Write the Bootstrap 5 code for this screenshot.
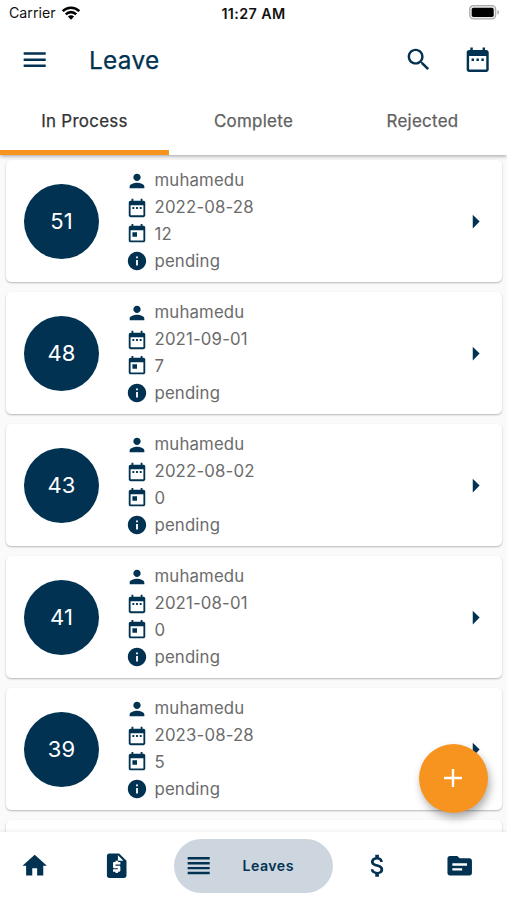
<!DOCTYPE html>
<html lang="en">
<head>
<meta charset="utf-8">
<meta name="viewport" content="width=device-width, initial-scale=1">
<title>Leave</title>
<link href="https://cdn.jsdelivr.net/npm/bootstrap@5.3.0/dist/css/bootstrap.min.css" rel="stylesheet">
<style>
:root{--navy:#023252;--orange:#f7941f}
body{font-family:Inter,"Liberation Sans",sans-serif;background:#fafafa;color:var(--navy)}
.screen{width:507px;height:900px;overflow:hidden}
.ico{width:29.4px;height:29.4px;fill:currentColor;flex:none;display:block}
.ico-sm{width:22px;height:22px}
.ico-arrow{width:33px;height:33px}
.status{height:28px;color:#111;font-size:14.2px;padding:0 7px 0 9px}
.carrier{padding-bottom:2px}
.status-time{font-weight:600;font-size:14.3px;letter-spacing:.4px}
.appbar{height:64px;padding:0 14.5px 0 20px}
.title{font-size:24.4px;line-height:28px;letter-spacing:.3px;margin-left:39.5px;font-weight:400;-webkit-text-stroke:.25px currentColor}
.top-area{box-shadow:0 1px 4px rgba(0,0,0,.38);z-index:2}
.tabs{height:63px}
.tabs .nav-link{height:63px;border-bottom:5px solid transparent;border-radius:0;color:#616161;font-weight:400;-webkit-text-stroke:.25px currentColor;font-size:16.9px;line-height:24px;letter-spacing:.3px;padding:17px 0 0}
.tabs .nav-link.active{border-color:var(--orange);color:#333}
.list-area{padding:5px 5px 0 6px;gap:10px;min-height:0}
.leave-card{height:122px;flex:none;border-radius:5px;box-shadow:0 1px 2px rgba(0,0,0,.28);padding:0 10px 0 18px}
.num{width:75px;height:75px;background:var(--navy);font-size:22px;letter-spacing:.2px}
.info{margin-left:27px;color:#6b6b6b;font-size:16.8px;letter-spacing:.15px}
.info-row{height:26.85px;gap:6.5px}
.info-row svg{color:var(--navy)}
.fab{width:69px;height:69px;right:19.5px;bottom:87.5px;background:var(--orange);z-index:3;box-shadow:2px 5px 9px rgba(0,0,0,.32)}
.bottom-nav{height:68px;z-index:2;box-shadow:0 -1px 4px rgba(0,0,0,.07);padding:0 0 0 20.3px}
.bottom-nav .bill{margin:0 42.5px 0 52.5px}
.bottom-nav .money{margin:0 53px 0 29.5px}
.pill{width:159px;height:54px;background:#cdd6de;font-weight:600;font-size:14.2px;letter-spacing:.45px;padding-left:10px;gap:29px}
</style>
<script src="https://cdn.jsdelivr.net/npm/bootstrap@5.3.0/dist/js/bootstrap.bundle.min.js"></script>
</head>
<body>
<svg class="d-none">
<symbol id="range" viewBox="0 0 24 24"><path d="M9 11H7v2h2v-2zm4 0h-2v2h2v-2zm4 0h-2v2h2v-2zm2-7h-1V2h-2v2H8V2H6v2H5c-1.11 0-1.99.9-1.99 2L3 20c0 1.1.89 2 2 2h14c1.1 0 2-.9 2-2V6c0-1.1-.9-2-2-2zm0 16H5V9h14v11z"/></symbol>
<symbol id="today" viewBox="0 0 24 24"><path d="M19 3h-1V1h-2v2H8V1H6v2H5c-1.11 0-1.99.9-1.99 2L3 19c0 1.1.89 2 2 2h14c1.1 0 2-.9 2-2V5c0-1.1-.9-2-2-2zm0 16H5V8h14v11zM7 10h5v5H7z"/></symbol>
<symbol id="person" viewBox="0 0 24 24"><path d="M12 12c2.21 0 4-1.79 4-4s-1.79-4-4-4-4 1.79-4 4 1.79 4 4 4zm0 2c-2.67 0-8 1.34-8 4v2h16v-2c0-2.66-5.33-4-8-4z"/></symbol>
<symbol id="info" viewBox="0 0 24 24"><path d="M12 2C6.48 2 2 6.48 2 12s4.48 10 10 10 10-4.48 10-10S17.52 2 12 2zm1 15h-2v-6h2v6zm0-8h-2V7h2v2z"/></symbol>
<symbol id="arrow" viewBox="0 0 24 24"><path d="M10 17l5-5-5-5v10z"/></symbol>
</svg>
<div class="screen d-flex flex-column position-relative">
  <header class="top-area bg-white position-relative flex-shrink-0">
    <div class="status d-flex align-items-center justify-content-between position-relative">
      <div class="carrier d-flex align-items-center">Carrier
        <svg class="ms-1" width="22" height="16" viewBox="0 0 22 16" fill="none" stroke="#000" stroke-width="2.6"><path d="M2.7 6.1a11.8 11.8 0 0 1 16.6 0M5.8 9.3a7.4 7.4 0 0 1 10.4 0"/><path d="M11 14.7 7.9 11.6a4.4 4.4 0 0 1 6.2 0z" fill="#000" stroke="none"/></svg>
      </div>
      <div class="status-time position-absolute start-50 translate-middle-x text-nowrap">11:27 AM</div>
      <svg class="mb-1" width="31" height="15" viewBox="0 0 31 15"><rect x=".7" y=".7" width="26" height="13.2" rx="3.6" fill="#ececec" stroke="#aaa" stroke-width="1.2"/><rect x="2.7" y="2.7" width="22" height="9.2" rx="1.7"/><path d="M28.4 5v4.6c2.2-.8 2.2-3.8 0-4.6z" fill="#aaa"/></svg>
    </div>
    <div class="appbar d-flex align-items-center">
      <svg class="ico" viewBox="0 0 24 24"><path d="M3 18h18v-2H3v2zm0-5h18v-2H3v2zm0-7v2h18V6H3z"/></svg>
      <div class="title">Leave</div>
      <svg class="ico ms-auto" viewBox="0 0 24 24"><path d="M15.5 14h-.79l-.28-.27C15.41 12.59 16 11.11 16 9.5 16 5.91 13.09 3 9.5 3S3 5.91 3 9.5 5.91 16 9.5 16c1.61 0 3.09-.59 4.23-1.57l.27.28v.79l5 4.99L20.49 19l-4.99-5zm-6 0C7.01 14 5 11.99 5 9.5S7.01 5 9.5 5 14 7.01 14 9.5 11.99 14 9.5 14z"/></svg>
      <svg class="ico" style="margin-left:30px"><use href="#range"/></svg>
    </div>
    <nav class="tabs nav nav-fill flex-nowrap">
      <a class="nav-link active col-4" href="#">In Process</a>
      <a class="nav-link col-4" href="#">Complete</a>
      <a class="nav-link col-4" href="#">Rejected</a>
    </nav>
  </header>
  <main class="list-area d-flex flex-column flex-fill overflow-hidden" id="leaves"></main>
  <button class="fab btn border-0 rounded-circle position-absolute d-flex align-items-center justify-content-center p-0" aria-label="Add">
    <svg width="18" height="18" viewBox="0 0 18 18" stroke="#fff" stroke-width="2.4"><path d="M9 0v18M0 9h18"/></svg>
  </button>
  <nav class="bottom-nav bg-white d-flex align-items-center position-relative flex-shrink-0">
    <svg class="ico" viewBox="0 0 24 24"><path d="M10 20v-6h4v6h5v-8h3L12 3 2 12h3v8z"/></svg>
    <svg class="ico bill" viewBox="0 0 24 24"><path d="M14 2H6c-1.1 0-1.99.9-1.99 2L4 20c0 1.1.89 2 1.99 2H18c1.1 0 2-.9 2-2V8l-6-6zm1 9h-4v1h3c.55 0 1 .45 1 1v3c0 .55-.45 1-1 1h-1v1h-2v-1H9v-2h4v-1h-3c-.55 0-1-.45-1-1v-3c0-.55.45-1 1-1h1V8h2v1h2v2zm-2-3V3.5L17.5 8H13z"/></svg>
    <div class="pill rounded-pill d-flex align-items-center">
      <svg class="ico" viewBox="0 0 24 24"><path d="M3 15h18v-2H3v2zm0 4h18v-2H3v2zm0-8h18V9H3v2zm0-6v2h18V5H3z"/></svg>
      <span>Leaves</span>
    </div>
    <svg class="ico money" viewBox="0 0 24 24"><path d="M11.8 10.9c-2.27-.59-3-1.2-3-2.15 0-1.09 1.01-1.85 2.7-1.85 1.78 0 2.44.85 2.5 2.1h2.21c-.07-1.72-1.12-3.3-3.21-3.81V3h-3v2.16c-1.94.42-3.5 1.68-3.5 3.61 0 2.31 1.91 3.46 4.7 4.13 2.5.6 3 1.48 3 2.41 0 .69-.49 1.79-2.7 1.79-2.06 0-2.87-.92-2.98-2.1h-2.2c.12 2.19 1.76 3.42 3.68 3.83V21h3v-2.15c1.95-.37 3.5-1.5 3.5-3.55 0-2.84-2.43-3.81-4.7-4.4z"/></svg>
    <svg class="ico" viewBox="0 0 24 24"><path d="M20 6h-8l-2-2H4c-1.1 0-1.99.9-1.99 2L2 18c0 1.1.9 2 2 2h16c1.1 0 2-.9 2-2V8c0-1.1-.9-2-2-2zm-6 10H6v-2h8v2zm4-4H6v-2h12v2z"/></svg>
  </nav>
</div>
<script>
const leaves = [[51,'2022-08-28',12],[48,'2021-09-01',7],[43,'2022-08-02',0],[41,'2021-08-01',0],[39,'2023-08-28',5]];
const row = (icon, text) => `<div class="info-row d-flex align-items-center"><svg class="ico ico-sm"><use href="#${icon}"/></svg><span>${text}</span></div>`;
document.getElementById('leaves').innerHTML = leaves.map(([n, date, days]) => `
  <article class="leave-card bg-white d-flex align-items-center">
    <div class="num rounded-circle text-white d-flex align-items-center justify-content-center">${n}</div>
    <div class="info">${row('person','muhamedu')}${row('range',date)}${row('today',days)}${row('info','pending')}</div>
    <svg class="ico ico-arrow ms-auto"><use href="#arrow"/></svg>
  </article>`).join('') + '<article class="leave-card bg-white"></article>';
</script>
</body>
</html>
